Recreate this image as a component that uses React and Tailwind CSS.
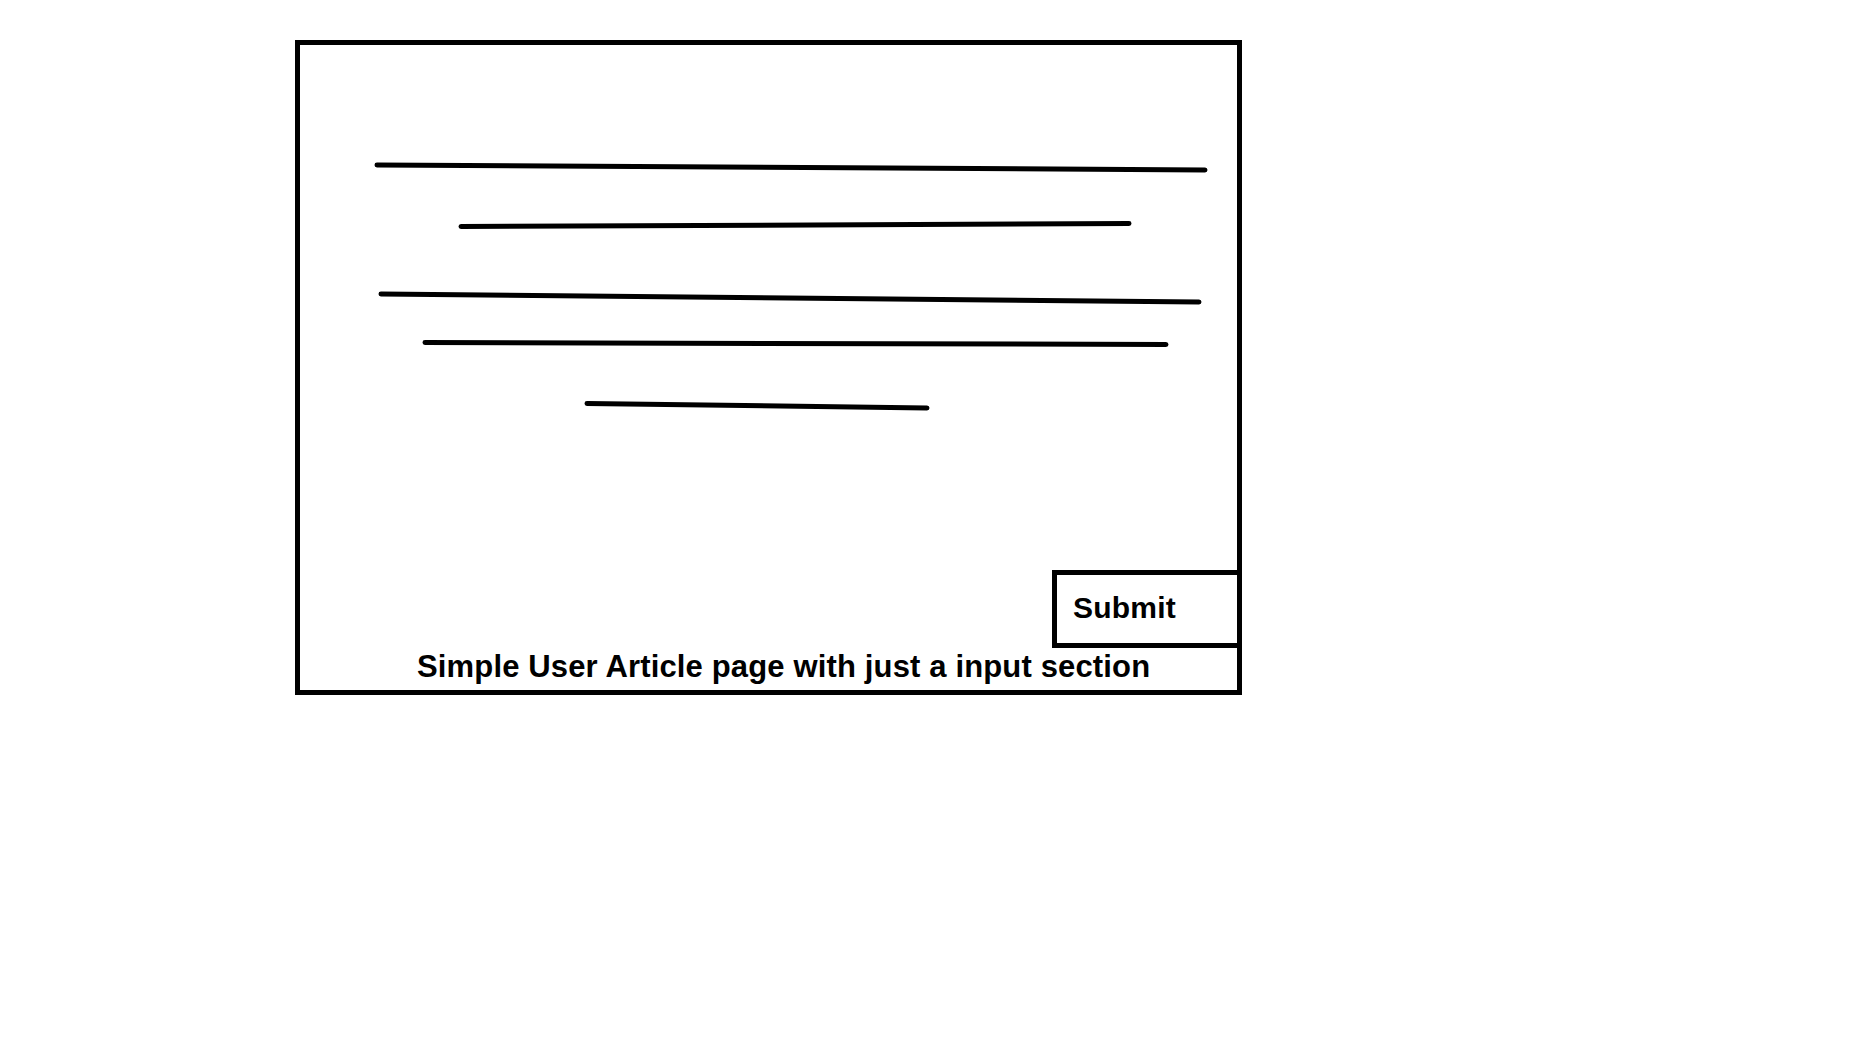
const lines = [
  [77, 120, 905, 125],
  [161, 181.5, 829, 178.5],
  [81, 249, 899, 257],
  [125, 297.5, 866, 299.5],
  [287, 358.5, 627, 363],
];

export default function App() {
  return (
    <div className="min-h-[1062px] w-full bg-white pt-[40px] pl-[295px] font-['Liberation_Sans',Arial,sans-serif] text-black">
      {/* Article box */}
      <div className="flex h-[655px] w-[947px] flex-col border-[5px] border-black">
        {/* scribbled text lines */}
        <svg width="937" height="380" viewBox="0 0 937 380" className="block shrink-0">
          {lines.map(([x1, y1, x2, y2], i) => (
            <line
              key={i}
              x1={x1}
              y1={y1}
              x2={x2}
              y2={y2}
              stroke="#000"
              strokeWidth="5"
              strokeLinecap="round"
            />
          ))}
        </svg>

        <div className="mt-auto flex justify-end">
          <button
            type="button"
            className="flex h-[78px] w-[185px] items-center border-y-[5px] border-l-[5px] border-black bg-white pb-[2px] pl-[16px] text-left text-[30px] font-bold leading-[30px] tracking-[0.2px]"
          >
            Submit
          </button>
        </div>

        <p className="pt-[2px] pb-[6px] pl-[117px] text-[31px] font-bold leading-[34px] tracking-[0.15px]">
          Simple User Article page with just a input section
        </p>
      </div>
    </div>
  );
}
